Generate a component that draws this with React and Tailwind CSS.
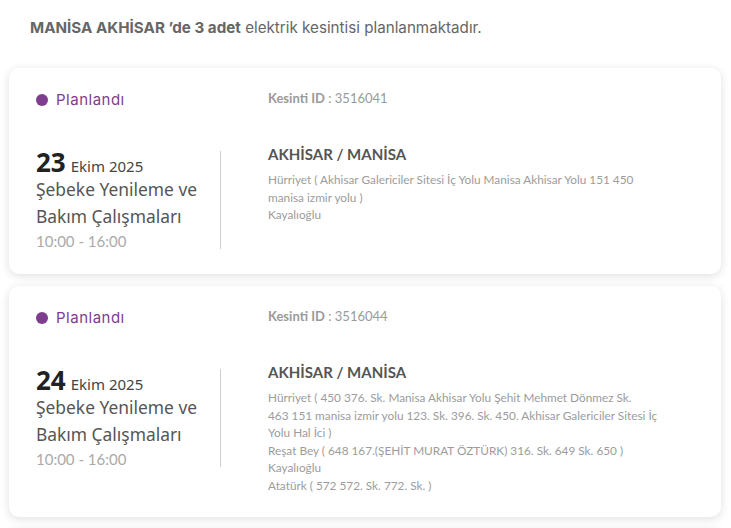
import React from "react";

const geo = { fontFamily: "Lato, 'Noto Sans', sans-serif" };
const inter = { fontFamily: "Inter, Lato, sans-serif" };

function Card({ day, id, lines }) {
  return (
    <div className="rounded-[10px] bg-white shadow-[0_2px_10px_rgba(0,0,0,0.13)] pl-[27px] pr-6 pt-[22px] pb-[22px]">
      <div className="flex items-center">
        <div className="w-[232px] flex items-center gap-[8px]" style={inter}>
          <span className="w-[12px] h-[12px] rounded-full bg-[#7e3d8d]" />
          <span className="text-[15px] leading-[20px] tracking-[0.5px] text-[#7e3d8d]">Planlandı</span>
        </div>
        <div className="text-[13px] leading-[16px] text-[#9a9a9a] -mt-[4px]" style={geo}>
          <span className="font-bold">Kesinti ID</span> : {id}
        </div>
      </div>
      <div className="flex items-start mt-[34px]">
        <div className="flex mt-[4px]">
          <div className="w-[184px]" style={{ fontFamily: "'Noto Sans', sans-serif" }}>
            <div className="h-[28px] flex items-baseline gap-[5px] text-[#444]">
              <span className="text-[26px] font-bold text-[#222] leading-[28px]">{day}</span>
              <span className="text-[15px]">Ekim 2025</span>
            </div>
            <div className="text-[17.4px] leading-[27px] text-[#555]">
              Şebeke Yenileme ve
              <br />
              Bakım Çalışmaları
            </div>
            <div className="text-[15px] leading-[22px] text-[#aaa]" style={geo}>
              10:00 - 16:00
            </div>
          </div>
          <div className="w-px bg-[#cfcfcf] my-[3px]" />
        </div>
        <div className="ml-[47px]" style={geo}>
          <div className="text-[15px] leading-[20px] font-bold text-[#555]">
            AKHİSAR / MANİSA
          </div>
          <div className="mt-[7px] text-[11.8px] leading-[17.6px] text-[#9c9c9c]">
            {lines.map((l, i) => (
              <div key={i} className="whitespace-nowrap">{l}</div>
            ))}
          </div>
        </div>
      </div>
    </div>
  );
}

export default function App() {
  return (
    <div className="bg-white w-[731px] h-[528px] overflow-hidden pl-[9px] pr-[10px]">
      <div className="pl-[21px] pt-[18px] text-[15.2px] leading-[20px] text-[#666]" style={inter}>
        <span className="font-bold">MANİSA AKHİSAR ’de 3 adet</span> elektrik kesintisi planlanmaktadır.
      </div>
      <div className="mt-[30px] flex flex-col gap-[12px]">
        <Card
          day="23"
          id="3516041"
          lines={[
            "Hürriyet ( Akhisar Galericiler Sitesi İç Yolu Manisa Akhisar Yolu 151 450",
            "manisa izmir yolu )",
            "Kayalıoğlu",
          ]}
        />
        <Card
          day="24"
          id="3516044"
          lines={[
            "Hürriyet ( 450 376. Sk. Manisa Akhisar Yolu Şehit Mehmet Dönmez Sk.",
            "463 151 manisa izmir yolu 123. Sk. 396. Sk. 450. Akhisar Galericiler Sitesi İç",
            "Yolu Hal İci )",
            "Reşat Bey ( 648 167.(ŞEHİT MURAT ÖZTÜRK) 316. Sk. 649 Sk. 650 )",
            "Kayalıoğlu",
            "Atatürk ( 572 572. Sk. 772. Sk. )",
          ]}
        />
        <div className="rounded-[10px] bg-white shadow-[0_2px_10px_rgba(0,0,0,0.13)] h-[100px]" />
      </div>
    </div>
  );
}
